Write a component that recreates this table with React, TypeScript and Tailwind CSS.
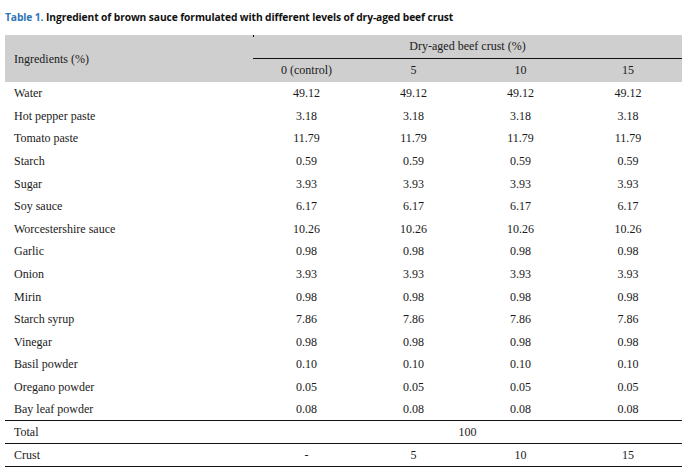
const rows: [string, string][] = [
  ['Water', '49.12'],
  ['Hot pepper paste', '3.18'],
  ['Tomato paste', '11.79'],
  ['Starch', '0.59'],
  ['Sugar', '3.93'],
  ['Soy sauce', '6.17'],
  ['Worcestershire sauce', '10.26'],
  ['Garlic', '0.98'],
  ['Onion', '3.93'],
  ['Mirin', '0.98'],
  ['Starch syrup', '7.86'],
  ['Vinegar', '0.98'],
  ['Basil powder', '0.10'],
  ['Oregano powder', '0.05'],
  ['Bay leaf powder', '0.08'],
];

export default function App() {
  return (
    <div className="w-[695px] h-[474px] bg-white overflow-hidden pt-[10px] pl-[5px]">
      <div className="h-[14px] text-[10.25px] font-bold leading-[14px] text-[#111] tracking-[-0.1px]" style={{ fontFamily: '"Open Sans", sans-serif' }}>
        <span className="text-[#2e75b6]">Table 1.</span> Ingredient of brown sauce formulated with different levels of dry-aged beef crust
      </div>

      <table className="mt-[11px] w-[677px] border-collapse text-[12px] text-[#1a1a1a]" style={{ fontFamily: '"Liberation Serif", serif' }}>
        <colgroup>
          <col className="w-[248px]" />
          <col className="w-[107px]" />
          <col className="w-[107px]" />
          <col className="w-[107px]" />
          <col className="w-[108px]" />
        </colgroup>
        <thead className="bg-[#cfcfcf]">
          <tr className="h-[23px]">
            <th rowSpan={2} className="text-left font-normal pl-[9px] pt-[1px]">Ingredients (%)</th>
            <th colSpan={4} className="relative font-normal border-b border-[#111]">
              <span className="absolute left-0 top-0 w-[1px] h-[2px] bg-black" />
              Dry-aged beef crust (%)
            </th>
          </tr>
          <tr className="h-[24px]">
            <th className="font-normal">0 (control)</th>
            <th className="font-normal">5</th>
            <th className="font-normal">10</th>
            <th className="font-normal">15</th>
          </tr>
        </thead>
        <tbody>
          {rows.map(([name, v], i) => (
            <tr key={name} className={`h-[22.6px] ${i === rows.length - 1 ? 'border-b-[1.5px] border-[#111]' : ''}`}>
              <td className="pl-[9px]">{name}</td>
              <td className="text-center">{v}</td>
              <td className="text-center">{v}</td>
              <td className="text-center">{v}</td>
              <td className="text-center">{v}</td>
            </tr>
          ))}
          <tr className="h-[23px] border-b-[1.5px] border-[#111]">
            <td className="pl-[9px]">Total</td>
            <td colSpan={4} className="text-center">100</td>
          </tr>
          <tr className="h-[23px] border-b-[1.5px] border-[#111]">
            <td className="pl-[9px]">Crust</td>
            <td className="text-center">-</td>
            <td className="text-center">5</td>
            <td className="text-center">10</td>
            <td className="text-center">15</td>
          </tr>
        </tbody>
      </table>
    </div>
  );
}
